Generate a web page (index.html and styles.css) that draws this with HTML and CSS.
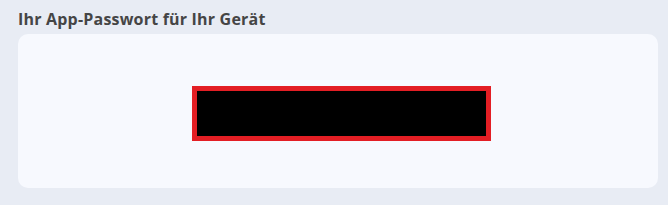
FILE: index.html
```html
<!DOCTYPE html>
<html lang="de">
<head>
    <meta charset="UTF-8">
    <title>App-Passwort</title>
    <link rel="stylesheet" href="styles.css">
</head>
<body>
    <section class="password-section">
        <h2 class="section-title">Ihr App-Passwort für Ihr Gerät</h2>
        <div class="password-card">
            <div class="password-box"></div>
        </div>
    </section>
</body>
</html>
```

FILE: styles.css
```css
* {
    margin: 0;
    padding: 0;
    box-sizing: border-box;
}

body {
    font-family: 'Open Sans', 'Roboto', sans-serif;
    background-color: #e8ecf4;
    width: 668px;
    height: 205px;
}

.password-section {
    padding: 9px 10px 0 18px;
}

.section-title {
    font-size: 16px;
    font-weight: 700;
    color: #454545;
    line-height: 20px;
    letter-spacing: 0.2px;
    margin-bottom: 5px;
}

.password-card {
    background-color: #f7f9fe;
    border-radius: 10px;
    width: 640px;
    height: 154px;
    display: flex;
    justify-content: center;
    padding: 52px 0 0 7px;
}

.password-box {
    width: 299px;
    height: 55px;
    background-color: #000;
    border: 5px solid #e31e24;
}
```
